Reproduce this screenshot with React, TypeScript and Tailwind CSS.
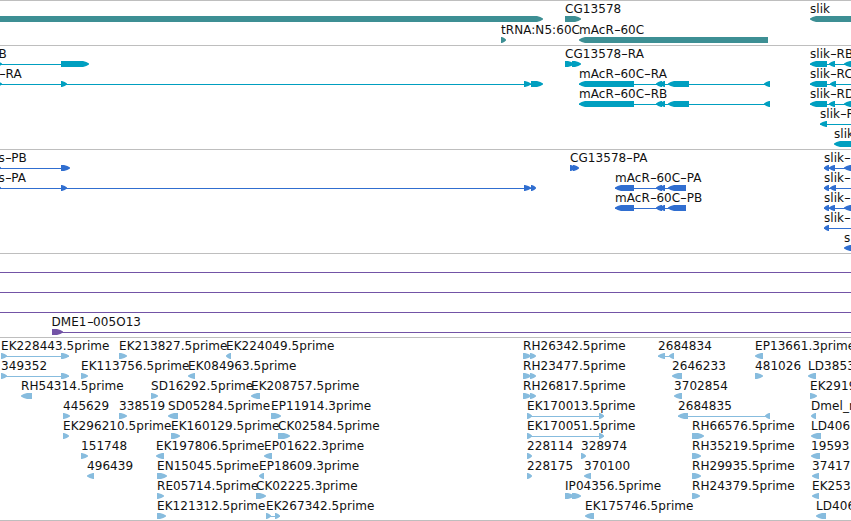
type Dir = 'l' | 'r'
type Block = [start: number, end: number, dir: Dir]

interface Feature {
  x: number
  label?: string
  blocks?: Block[]
  line?: [number, number]
}

interface Track {
  name: string
  color: string
  height: string
  rowHeight: string
  rows: Feature[][]
}

const WIDTH = 851

// Feature made of a single arrow block
const one = (label: string, start: number, end: number, dir: Dir): Feature => ({
  x: start,
  label,
  blocks: [[start, end, dir]],
})

const macrTranscript = (label: string): Feature => ({
  x: 579,
  label,
  line: [579, 770],
  blocks: [[579, 634, 'l'], [656, 662, 'l'], [660, 665, 'l'], [668, 689, 'l'], [764, 770, 'l']],
})

const macrProtein = (label: string): Feature => ({
  x: 615,
  label,
  line: [615, 686],
  blocks: [[615, 634, 'l'], [656, 662, 'l'], [660, 665, 'l'], [668, 686, 'l']],
})

const slikTranscript = (label: string): Feature => ({
  x: 810,
  label,
  line: [810, WIDTH],
  blocks: [[810, 827, 'l'], [829, 835, 'l'], [844, 860, 'l']],
})

const slikProtein: Feature = {
  x: 824,
  label: 'slik-',
  line: [824, WIDTH],
  blocks: [[824, 829, 'l'], [829, 835, 'l'], [844, 860, 'l']],
}

const rhPair = (label: string): Feature => ({
  x: 523,
  label,
  blocks: [[523, 531, 'r'], [530, 536, 'r']],
})

const tracks: Track[] = [
  {
    name: 'genes',
    color: '#3d8f94',
    height: 'h-[45px]',
    rowHeight: 'h-[21px]',
    rows: [
      [{ x: -10, blocks: [[-10, 543, 'r']] }, one('CG13578', 565, 581, 'r'), one('slik', 810, 870, 'l')],
      [one('tRNA:N5:60C', 501, 506, 'r'), one('mAcR-60C', 579, 768, 'l')],
    ],
  },
  {
    name: 'transcripts',
    color: '#009fc0',
    height: 'h-[104px]',
    rowHeight: 'h-5',
    rows: [
      [
        { x: -1.5, label: 'B', line: [0, 61], blocks: [[-4, 2, 'r'], [61, 89, 'r']] },
        { x: 565, label: 'CG13578-RA', blocks: [[565, 574, 'r'], [572, 581, 'r']] },
        slikTranscript('slik-RB'),
      ],
      [
        { x: -1, label: '-RA', line: [0, 540], blocks: [[-4, 2, 'r'], [61, 67, 'r'], [524, 531, 'r'], [531, 543, 'r']] },
        macrTranscript('mAcR-60C-RA'),
        { x: 810, label: 'slik-RC', line: [810, WIDTH], blocks: [[810, 827, 'l'], [830, 836, 'l']] },
      ],
      [macrTranscript('mAcR-60C-RB'), slikTranscript('slik-RD')],
      [{ x: 820, label: 'slik-R', line: [820, WIDTH], blocks: [[820, 827, 'l']] }],
      [one('slik', 834, 870, 'l')],
    ],
  },
  {
    name: 'proteins',
    color: '#306ed0',
    height: 'h-[104px]',
    rowHeight: 'h-5',
    rows: [
      [
        { x: -1.5, label: 's-PB', line: [0, 61], blocks: [[-5, 1, 'r'], [61, 70, 'r']] },
        { x: 570, label: 'CG13578-PA', blocks: [[570, 576, 'r'], [573, 579, 'r']] },
        slikProtein,
      ],
      [
        { x: -1.5, label: 's-PA', line: [0, 531], blocks: [[-5, 1, 'r'], [61, 67, 'r'], [524, 531, 'r'], [531, 536, 'r']] },
        macrProtein('mAcR-60C-PA'),
        { x: 824, label: 'slik-', line: [824, WIDTH], blocks: [[824, 829, 'l'], [830, 836, 'l']] },
      ],
      [macrProtein('mAcR-60C-PB'), slikProtein],
      [{ x: 824, label: 'slik-', line: [824, WIDTH], blocks: [[824, 829, 'l']] }],
      [one('s', 844, 870, 'l')],
    ],
  },
  {
    name: 'repeats',
    color: '#7353a6',
    height: 'h-[84px]',
    rowHeight: 'h-5',
    rows: [
      [{ x: 0, line: [0, WIDTH] }],
      [{ x: 0, line: [0, WIDTH] }],
      [{ x: 0, line: [0, WIDTH] }],
      [{ x: 51.5, label: 'DME1-005O13', line: [52, WIDTH], blocks: [[52, 63, 'r']] }],
    ],
  },
  {
    name: 'insertions',
    color: '#87bcde',
    height: 'h-[183px]',
    rowHeight: 'h-5',
    rows: [
      [
        { x: 1, label: 'EK228443.5prime', line: [1, 69], blocks: [[1, 7, 'r'], [61, 69, 'r']] },
        one('EK213827.5prime', 119, 127, 'r'),
        one('EK224049.5prime', 226, 231, 'l'),
        rhPair('RH26342.5prime'),
        { x: 658, label: '2684834', line: [658, 674], blocks: [[658, 665, 'l'], [669, 674, 'l']] },
        one('EP13661.3prime', 755, 763, 'l'),
      ],
      [
        { x: 1, label: '349352', line: [1, 69], blocks: [[1, 7, 'r'], [61, 69, 'r']] },
        one('EK113756.5prime', 81, 88, 'r'),
        one('EK084963.5prime', 188, 195, 'l'),
        rhPair('RH23477.5prime'),
        one('2646233', 672, 682, 'l'),
        one('481026', 755, 763, 'r'),
        one('LD3853', 808, 816, 'l'),
      ],
      [
        one('RH54314.5prime', 21, 32, 'l'),
        one('SD16292.5prime', 151, 158, 'r'),
        one('EK208757.5prime', 251, 260, 'l'),
        rhPair('RH26817.5prime'),
        one('3702854', 674, 682, 'l'),
        one('EK2919', 810, 817, 'r'),
      ],
      [
        one('445629', 63, 70, 'r'),
        one('338519', 119, 127, 'r'),
        one('SD05284.5prime', 168, 178, 'l'),
        one('EP11914.3prime', 271, 281, 'r'),
        { x: 527, label: 'EK170013.5prime', line: [527, 604], blocks: [[527, 532, 'r'], [599, 604, 'r']] },
        { x: 678, label: '2684835', line: [678, 770], blocks: [[678, 688, 'l'], [765, 770, 'l']] },
        one('Dmel_r', 811, 816, 'l'),
      ],
      [
        one('EK296210.5prime', 63, 69, 'r'),
        one('EK160129.5prime', 171, 180, 'r'),
        one('CK02584.5prime', 278, 290, 'r'),
        { x: 527, label: 'EK170051.5prime', line: [527, 604], blocks: [[527, 532, 'r'], [599, 604, 'r']] },
        one('RH66576.5prime', 692, 704, 'r'),
        one('LD406', 811, 821, 'l'),
      ],
      [
        one('151748', 81, 88, 'r'),
        one('EK197806.5prime', 156, 164, 'l'),
        one('EP01622.3prime', 264, 272, 'l'),
        one('228114', 527, 532, 'r'),
        one('328974', 581, 586, 'r'),
        one('RH35219.5prime', 692, 701, 'r'),
        one('19593', 811, 820, 'l'),
      ],
      [
        one('496439', 87, 94, 'l'),
        one('EN15045.5prime', 157, 167, 'r'),
        one('EP18609.3prime', 259, 264, 'l'),
        one('228175', 527, 532, 'r'),
        one('370100', 584, 591, 'l'),
        one('RH29935.5prime', 692, 701, 'r'),
        one('37417', 812, 819, 'l'),
      ],
      [
        one('RE05714.5prime', 157, 164, 'r'),
        one('CK02225.3prime', 256, 266, 'r'),
        { x: 565, label: 'IP04356.5prime', blocks: [[565, 574, 'r'], [572, 581, 'r']] },
        one('RH24379.5prime', 692, 700, 'r'),
        one('EK253', 812, 819, 'l'),
      ],
      [
        one('EK121312.5prime', 157, 166, 'r'),
        { x: 266, label: 'EK267342.5prime', line: [266, 280], blocks: [[266, 271, 'r'], [275, 280, 'r']] },
        one('EK175746.5prime', 585, 594, 'l'),
        one('LD406', 816, 826, 'l'),
      ],
    ],
  },
]

// Blocks end in a slightly rounded arrow head
function blockPoints([start, end, dir]: Block) {
  const tip = Math.min(6, end - start - 1)
  const [tail, head, s] = dir === 'r' ? [start, end, -1] : [end, start, 1]
  const neck = head + s * tip
  const mid = head + s * tip * 0.45
  return `${tail},0 ${neck},0 ${mid},1 ${head},2.5 ${head},3.5 ${mid},5 ${neck},6 ${tail},6`
}

// Hyphens are drawn wider than the font's own glyph
function Label({ x, text }: { x: number; text: string }) {
  return (
    <span
      className="absolute top-px whitespace-pre text-[12px] leading-[14px] tracking-[0.06px] text-[#111]"
      style={{ left: x }}
    >
      {text.split(/(-)/).map((part, i) =>
        part === '-' ? (
          <span key={i} className="inline-block w-[6.5px] origin-left scale-x-[1.6]">-</span>
        ) : (
          part
        ),
      )}
    </span>
  )
}

function Row({ features, color, className }: { features: Feature[]; color: string; className: string }) {
  return (
    <div className={`relative shrink-0 pt-[15px] ${className}`}>
      <svg width={WIDTH} height={6} className="block" fill={color}>
        {features.map((f, i) => (
          <g key={i}>
            {f.line && <rect x={f.line[0]} y={3} width={f.line[1] - f.line[0]} height={1} />}
            {f.blocks?.map((b, j) => <polygon key={j} points={blockPoints(b)} />)}
          </g>
        ))}
      </svg>
      {features.map((f, i) => f.label && <Label key={i} x={f.x} text={f.label} />)}
    </div>
  )
}

export default function App() {
  return (
    <div className="flex h-[521px] w-[851px] flex-col overflow-hidden border-b border-[#bebebe] bg-white font-['DejaVu_Sans',sans-serif]">
      {tracks.map((track) => (
        <div key={track.name} className={`flex shrink-0 flex-col border-t border-[#bebebe] ${track.height}`}>
          {track.rows.map((features, i) => (
            <Row key={i} features={features} color={track.color} className={track.rowHeight} />
          ))}
        </div>
      ))}
    </div>
  )
}
